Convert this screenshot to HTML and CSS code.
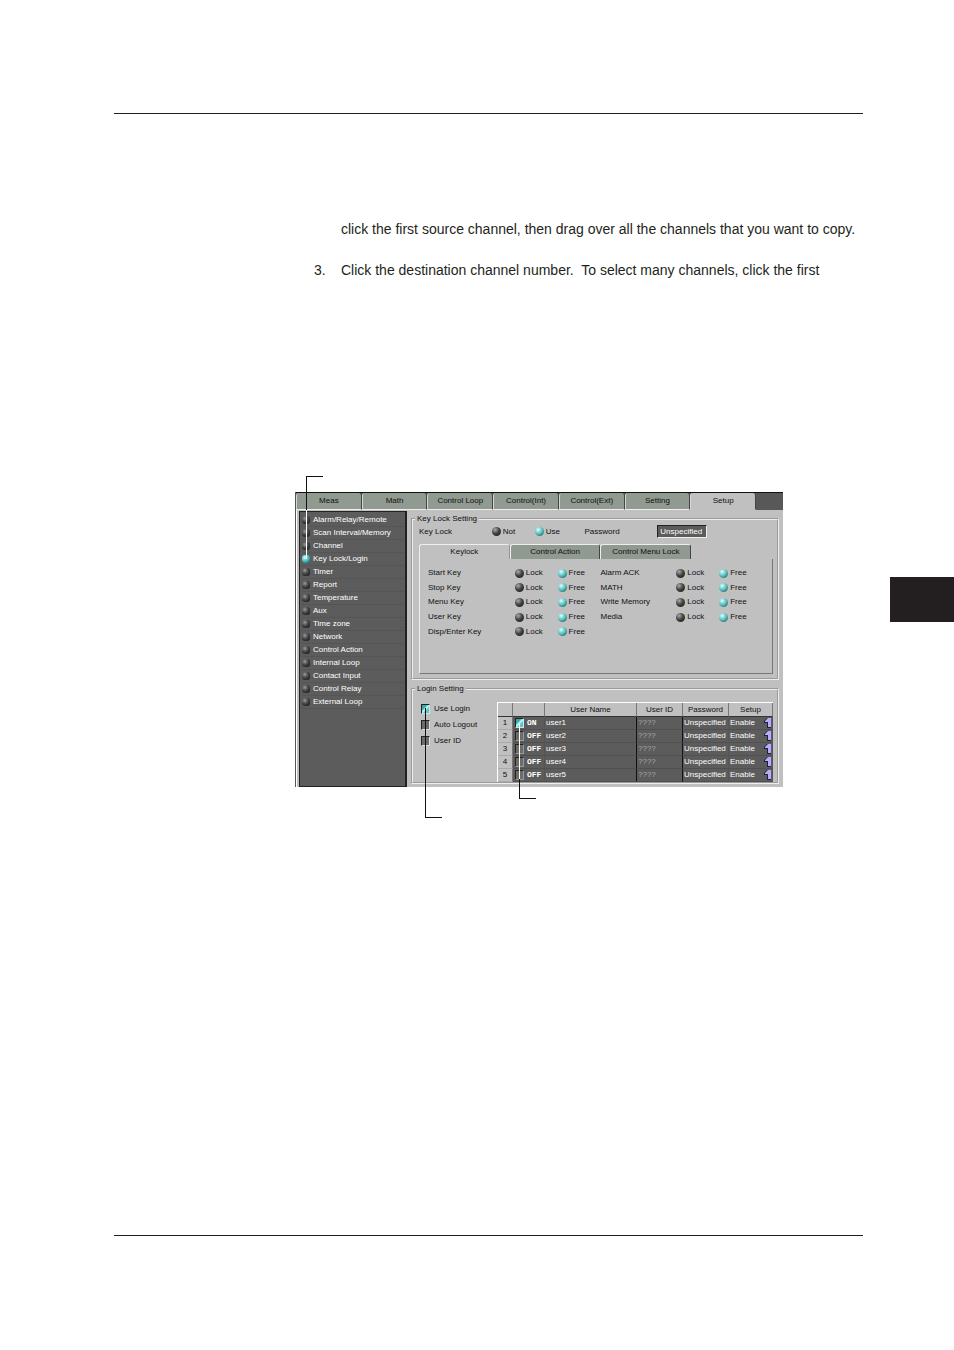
FILE: index.html
```html
<!DOCTYPE html>
<html lang="en">
<head>
  <meta charset="utf-8">
  <meta name="viewport" content="width=device-width, initial-scale=1.0">
  <title>Key Lock and Login Setup</title>
  <link rel="stylesheet" href="styles.css">
</head>

<body>

  <svg class="defs" aria-hidden="true">
    <symbol id="arrow" viewBox="0 0 8 10">
      <path d="M3 0H7V10H3V5H0V3Z" fill="#20203c"/>
      <path d="M4 0H7V9H4V4H1V3Z" fill="#b4acff"/>
    </symbol>
  </svg>

  <main>
    <div class="steps">
      <p>click the first source channel, then drag over all the channels that you want to copy.</p>
      <p class="step"><span class="num">3.</span>Click the destination channel number.&nbsp; To select many channels, click the first</p>
    </div>

    <div class="figure">

      <div class="window">
        <div class="tabs">
          <button type="button">Meas</button>
          <button type="button">Math</button>
          <button type="button">Control Loop</button>
          <button type="button">Control(Int)</button>
          <button type="button">Control(Ext)</button>
          <button type="button">Setting</button>
          <button type="button" class="active">Setup</button>
        </div>

        <div class="content">
          <nav class="menu">
            <a href="#">Alarm/Relay/Remote</a>
            <a href="#">Scan Interval/Memory</a>
            <a href="#">Channel</a>
            <a href="#" class="active">Key Lock/Login</a>
            <a href="#">Timer</a>
            <a href="#">Report</a>
            <a href="#">Temperature</a>
            <a href="#">Aux</a>
            <a href="#">Time zone</a>
            <a href="#">Network</a>
            <a href="#">Control Action</a>
            <a href="#">Internal Loop</a>
            <a href="#">Contact Input</a>
            <a href="#">Control Relay</a>
            <a href="#">External Loop</a>
          </nav>

          <form class="settings">
            <fieldset>
              <legend>Key Lock Setting</legend>
              <div class="keylock">
                <span>Key Lock</span>
                <label><input type="radio" name="keylock">Not</label>
                <label><input type="radio" name="keylock" checked>Use</label>
                <label for="password">Password</label>
                <input type="text" id="password" value="Unspecified">
              </div>

              <div class="subtabs">
                <button type="button" class="active">Keylock</button>
                <button type="button">Control Action</button>
                <button type="button">Control Menu Lock</button>
              </div>

              <div class="keys">
                <span>Start Key</span>
                <label><input type="radio" name="start">Lock</label>
                <label><input type="radio" name="start" checked>Free</label>
                <span>Alarm ACK</span>
                <label><input type="radio" name="alarm">Lock</label>
                <label><input type="radio" name="alarm" checked>Free</label>

                <span>Stop Key</span>
                <label><input type="radio" name="stop">Lock</label>
                <label><input type="radio" name="stop" checked>Free</label>
                <span>MATH</span>
                <label><input type="radio" name="math">Lock</label>
                <label><input type="radio" name="math" checked>Free</label>

                <span>Menu Key</span>
                <label><input type="radio" name="menu">Lock</label>
                <label><input type="radio" name="menu" checked>Free</label>
                <span>Write Memory</span>
                <label><input type="radio" name="write">Lock</label>
                <label><input type="radio" name="write" checked>Free</label>

                <span>User Key</span>
                <label><input type="radio" name="user">Lock</label>
                <label><input type="radio" name="user" checked>Free</label>
                <span>Media</span>
                <label><input type="radio" name="media">Lock</label>
                <label><input type="radio" name="media" checked>Free</label>

                <span>Disp/Enter Key</span>
                <label><input type="radio" name="disp">Lock</label>
                <label><input type="radio" name="disp" checked>Free</label>
              </div>
            </fieldset>

            <fieldset>
              <legend>Login Setting</legend>
              <div class="login">
                <div class="options">
                  <label><input type="checkbox" checked>Use Login</label>
                  <label><input type="checkbox">Auto Logout</label>
                  <label><input type="checkbox">User ID</label>
                </div>

                <table>
                  <colgroup>
                    <col class="c-num"><col class="c-on"><col class="c-name"><col class="c-id"><col class="c-pass"><col class="c-setup">
                  </colgroup>
                  <thead>
                    <tr><th></th><th></th><th>User Name</th><th>User ID</th><th>Password</th><th>Setup</th></tr>
                  </thead>
                  <tbody>
                    <tr>
                      <th>1</th>
                      <td><label class="switch"><input type="checkbox" checked>ON</label></td>
                      <td>user1</td><td class="id">????</td><td>Unspecified</td>
                      <td><div class="enable">Enable<svg><use href="#arrow"/></svg></div></td>
                    </tr>
                    <tr>
                      <th>2</th>
                      <td><label class="switch"><input type="checkbox">OFF</label></td>
                      <td>user2</td><td class="id">????</td><td>Unspecified</td>
                      <td><div class="enable">Enable<svg><use href="#arrow"/></svg></div></td>
                    </tr>
                    <tr>
                      <th>3</th>
                      <td><label class="switch"><input type="checkbox">OFF</label></td>
                      <td>user3</td><td class="id">????</td><td>Unspecified</td>
                      <td><div class="enable">Enable<svg><use href="#arrow"/></svg></div></td>
                    </tr>
                    <tr>
                      <th>4</th>
                      <td><label class="switch"><input type="checkbox">OFF</label></td>
                      <td>user4</td><td class="id">????</td><td>Unspecified</td>
                      <td><div class="enable">Enable<svg><use href="#arrow"/></svg></div></td>
                    </tr>
                    <tr>
                      <th>5</th>
                      <td><label class="switch"><input type="checkbox">OFF</label></td>
                      <td>user5</td><td class="id">????</td><td>Unspecified</td>
                      <td><div class="enable">Enable<svg><use href="#arrow"/></svg></div></td>
                    </tr>
                  </tbody>
                </table>
              </div>
            </fieldset>
          </form>
        </div>
      </div>

      <!-- callout lines -->
      <div class="callout callout-menu"></div>
      <div class="callout callout-login"></div>
      <div class="callout callout-user"></div>
    </div>
  </main>

  <footer></footer>

  <div class="chapter"></div>

</body>
</html>
```
FILE: styles.css
```css
*{
  box-sizing:border-box;
}

body{
  margin:0;
  padding:113px 91px 114px 114px;
  min-height:100vh;
  display:flex;
  flex-direction:column;
  position:relative;
  background-color:white;
  color:#231f20;
  font-family:"Liberation Sans", Arial, sans-serif;
  font-size:14px;
  line-height:20px;
}

.defs{
  position:absolute;
  width:0;
  height:0;
}

main{
  flex:1;
  border-top:1px solid #231f20;
}

footer{
  border-top:1px solid #231f20;
}

/* tab on the page edge */
.chapter{
  position:absolute;
  top:577px;
  right:0;
  width:64px;
  height:45px;
  background-color:#231f20;
}

.steps{
  margin:105px 0 212px 227px;
  white-space:nowrap;
}

.steps p{
  margin:0 0 21px 0;
}

.steps .step{
  margin-left:-27px;
  margin-bottom:0;
}

.num{
  display:inline-block;
  width:27px;
}

.figure{
  position:relative;
  margin:0 80px 0 181px;
}

.window{
  background-color:#c0c0c0;
  border-left:1px solid #555;
  color:#101010;
  font-size:8px;
  line-height:12px;
  white-space:nowrap;
}

button,input{
  margin:0;
  padding:0;
  font:inherit;
  color:inherit;
}

.tabs{
  display:flex;
  height:18px;
  padding-right:27px;
  background-color:#585858;
  border-top:1px solid #111;
}

.tabs button{
  flex:1;
  border:0;
  border-left:1px solid #d4d8d4;
  border-right:1px solid #444;
  border-bottom:1px solid #eee;
  border-radius:3px 3px 0 0;
  background-color:#909a90;
}

.tabs .active,.subtabs .active{
  background-color:#c0c0c0;
  border-bottom-color:#c0c0c0;
}

.subtabs .active{
  border-right-color:#909a90;
}

.content{
  display:flex;
  padding:1px 4px 0 2px;
  border-left:1px solid white;
}

.menu{
  flex:0 0 108px;
  display:flex;
  flex-direction:column;
  padding:2px 0 0 2px;
  border:1px solid #222;
  border-right:2px solid #222;
  background-color:#5c5c5c;
}

.menu a{
  height:13px;
  display:flex;
  align-items:center;
  color:white;
  text-decoration:none;
  border-bottom:1px solid #555;
}

.menu a::before{
  content:"";
  width:8px;
  height:8px;
  margin-right:3px;
  border-radius:3px;
  background:radial-gradient(circle at 35% 30%, #999, #444 45%, #111);
}

.menu .active::before{
  background:radial-gradient(circle at 35% 30%, #dff, #4bb 50%, #155);
}

.settings{
  flex:1;
  min-width:0;
  padding:2px 0 3px 4px;
}

fieldset{
  min-width:0;
  margin:0 0 3px 0;
  padding:0 4px 4px 6px;
  border:2px groove #eee;
}

fieldset:last-child{
  margin-bottom:0;
  padding-bottom:0;
}

legend{
  margin-left:-4px;
  padding:0 2px;
}

label{
  display:flex;
  align-items:center;
}

input[type="radio"],input[type="checkbox"]{
  appearance:none;
  flex:none;
  width:9px;
  height:9px;
  margin-right:2px;
}

input[type="radio"]{
  border-radius:50%;
  background:radial-gradient(circle at 35% 30%, #aaa, #444 45%, #111);
}

input[type="radio"]:checked{
  background:radial-gradient(circle at 35% 30%, #dff, #5bb 50%, #144);
}

input[type="checkbox"]{
  height:10px;
  border:1px solid #222;
  border-right-color:#ddd;
  border-bottom-color:#ddd;
  background-color:#6c6c68;
}

input[type="checkbox"]:checked{
  background:linear-gradient(135deg, #3aa 30%, #cff 50%, #5cc 65%);
}

input[type="text"]{
  width:100%;
  height:13px;
  padding-left:2px;
  border:1px solid #eee;
  border-top-color:#222;
  border-left-color:#222;
  background-color:#5c5c5c;
  color:white;
}

.keylock{
  display:grid;
  grid-template-columns:73fr 43fr 50fr 73fr 50fr 66fr;
  align-items:center;
  margin-bottom:6px;
}

.subtabs{
  display:grid;
  grid-template-columns:91fr 91fr 91fr 82fr;
}

.subtabs button{
  height:15px;
  border:1px solid #eee;
  border-right-color:#444;
  border-bottom:0;
  border-radius:3px 3px 0 0;
  background-color:#909a90;
}

.subtabs .active{
  background-color:#c0c0c0;
}

.keys{
  display:grid;
  grid-template-columns:87fr 43fr 43fr 76fr 43fr 53fr;
  grid-auto-rows:1fr;
  align-items:center;
  height:115px;
  padding:7px 0 34px 8px;
  border:1px solid #eee;
  border-top:0;
  border-right-color:#777;
  border-bottom-color:#777;
}

.login{
  display:flex;
  justify-content:space-between;
}

.options{
  padding:6px 0 0 2px;
}

.options label{
  height:16px;
}

.options input{
  margin-right:4px;
}

table{
  width:276px;
  margin-top:7px;
  table-layout:fixed;
  border-collapse:separate;
  border-spacing:0;
  border-top:1px solid white;
  border-left:1px solid white;
}

.c-num{ width:15px; }
.c-on{ width:32px; }
.c-name{ width:92px; }
.c-id{ width:46px; }
.c-pass{ width:46px; }

th,td{
  height:13px;
  padding:0;
}

th{
  font-weight:normal;
  border-right:1px solid #777;
  border-bottom:1px solid #aaa;
}

thead th{
  height:14px;
  border-bottom-color:#333;
}

td{
  padding-left:1px;
  color:white;
  background-color:#5c5c5c;
  border-right:1px solid #555;
  border-bottom:1px solid #505050;
}

td:nth-child(3),td:nth-child(4){
  border-right-color:#111;
}

.id{
  color:#aaa;
}

.switch{
  font-family:"Liberation Mono", monospace;
  font-weight:bold;
}

.switch input{
  margin:0 3px 0 1px;
}

.switch input:not(:checked){
  border-color:#222 #999 #999 #222;
}

.enable{
  display:flex;
  justify-content:space-between;
  align-items:center;
}

.enable svg{
  width:8px;
  height:10px;
}

/* black outside the window, white over its dark parts */
.callout{
  position:absolute;
  border-left:1px solid #111;
}

.callout::before{
  content:"";
  position:absolute;
  left:-1px;
  width:17px;
  height:1px;
  background-color:#111;
}

.callout-menu{
  top:-16px;
  left:11px;
  height:83px;
}

.callout-menu::before{
  top:0;
}

.callout-menu::after{
  content:"";
  position:absolute;
  top:34px;
  bottom:0;
  left:-1px;
  width:1px;
  background-color:white;
}

.callout-login{
  top:216px;
  left:130px;
  height:110px;
}

.callout-user{
  top:232px;
  right:263px;
  height:75px;
}

.callout-login::before,.callout-user::before{
  bottom:0;
}

.callout-user::after{
  content:"";
  position:absolute;
  top:0;
  left:-1px;
  width:1px;
  height:55px;
  background-color:white;
}
```
